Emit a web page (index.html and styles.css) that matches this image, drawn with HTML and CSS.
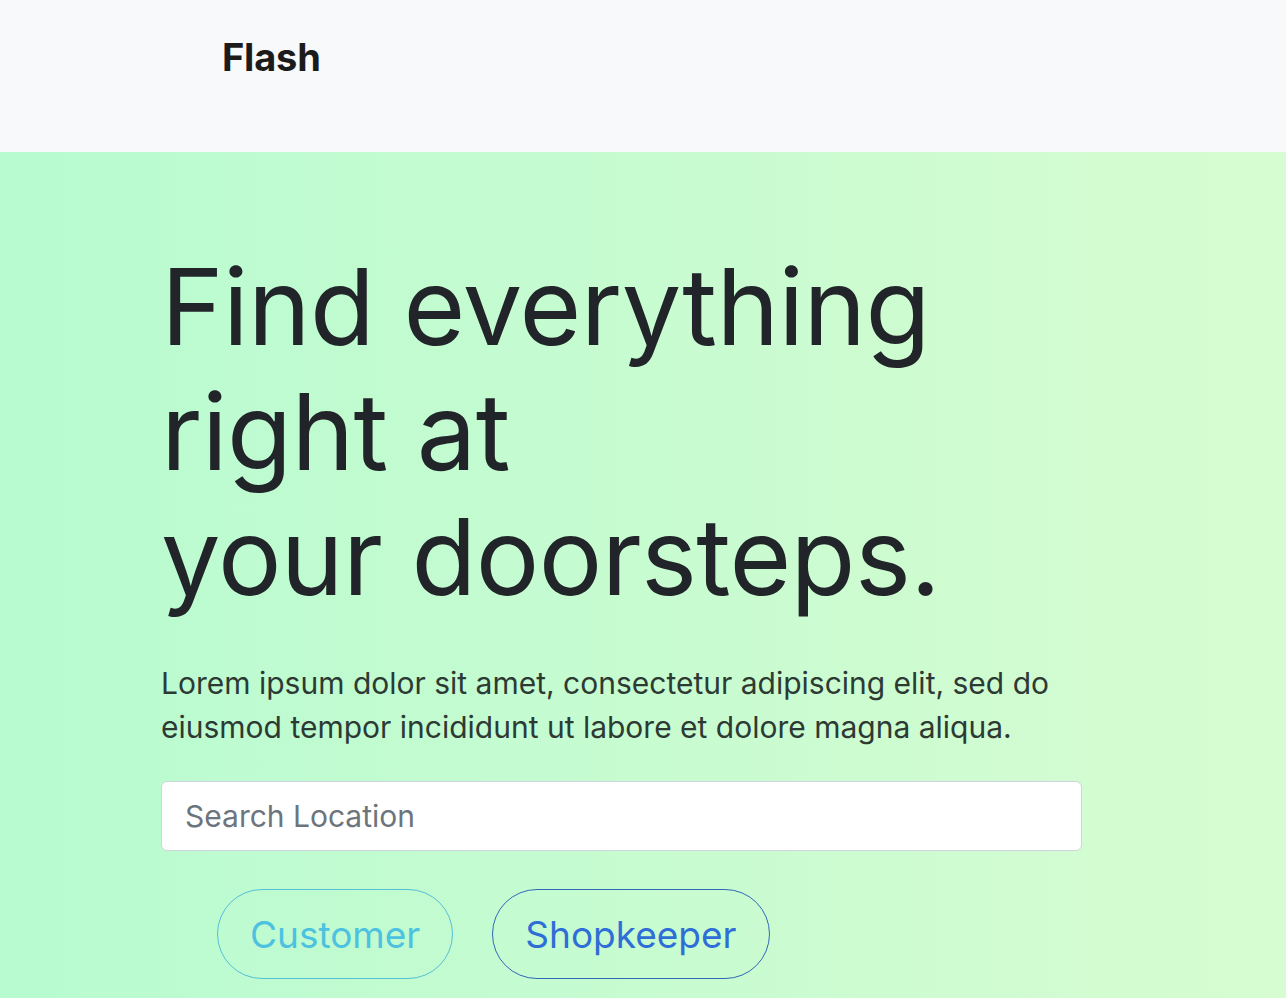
FILE: index.html
```html
<!DOCTYPE html>
<html lang="en">
<head>
<meta charset="utf-8">
<title>Flash</title>
<link rel="stylesheet" href="styles.css">
</head>
<body>
<header class="navbar">
  <div class="brand">Flash</div>
</header>
<main class="hero">
  <div class="hero-inner">
    <h1 class="headline">Find everything<br>right at<br>your doorsteps.</h1>
    <p class="lead">Lorem ipsum dolor sit amet, consectetur adipiscing elit, sed do<br>eiusmod tempor incididunt ut labore et dolore magna aliqua.</p>
    <input class="search" type="text" placeholder="Search Location">
    <div class="actions">
      <button class="pill pill-customer">Customer</button>
      <button class="pill pill-shop">Shopkeeper</button>
    </div>
  </div>
</main>
</body>
</html>
```
FILE: styles.css
```css
* { box-sizing: border-box; }
html, body { margin: 0; padding: 0; }
body {
  font-family: Inter, "Noto Sans", sans-serif;
  color: #212529;
  height: 998px;
  overflow: hidden;
  background: linear-gradient(90deg, #b8fbd0 0%, #d7fcd1 100%);
}
.navbar {
  height: 152px;
  background: #f8f9fa;
  display: flex;
  align-items: flex-start;
  padding: 34px 0 0 222px;
}
.brand {
  font-weight: 700;
  font-size: 38px;
  color: #1b1b1b;
  letter-spacing: -0.2px;
}
.hero {
  height: 846px;
  background: linear-gradient(90deg, #b8fbd0 0%, #d7fcd1 100%);
}
.hero-inner {
  padding: 92px 0 0 161px;
  display: flex;
  flex-direction: column;
  align-items: flex-start;
}
.headline {
  margin: 0;
  font-weight: 400;
  font-size: 106px;
  line-height: 125px;
  color: #212529;
  letter-spacing: -0.6px;
}
.lead {
  margin: 42px 0 0;
  font-size: 30px;
  line-height: 44px;
  color: #2d3a34;
}
.search {
  margin-top: 32px;
  width: 921px;
  height: 70px;
  border: 1px solid #ced4da;
  border-radius: 6px;
  background: #fff;
  padding: 0 23px;
  font-family: Inter, sans-serif;
  font-size: 30px;
  color: #495057;
  outline: none;
}
.search::placeholder { color: #6c757d; }
.actions {
  margin-top: 38px;
  margin-left: 56px;
  display: flex;
  gap: 39px;
}
.pill {
  height: 90px;
  padding: 0 32px;
  border-radius: 45px;
  background: transparent;
  font-family: Inter, sans-serif;
  font-size: 37px;
  border: 1.5px solid;
}
.pill-customer { color: #4cc2e0; border-color: #56bfd9; }
.pill-shop { color: #2f6ed6; border-color: #3167b8; }
```
